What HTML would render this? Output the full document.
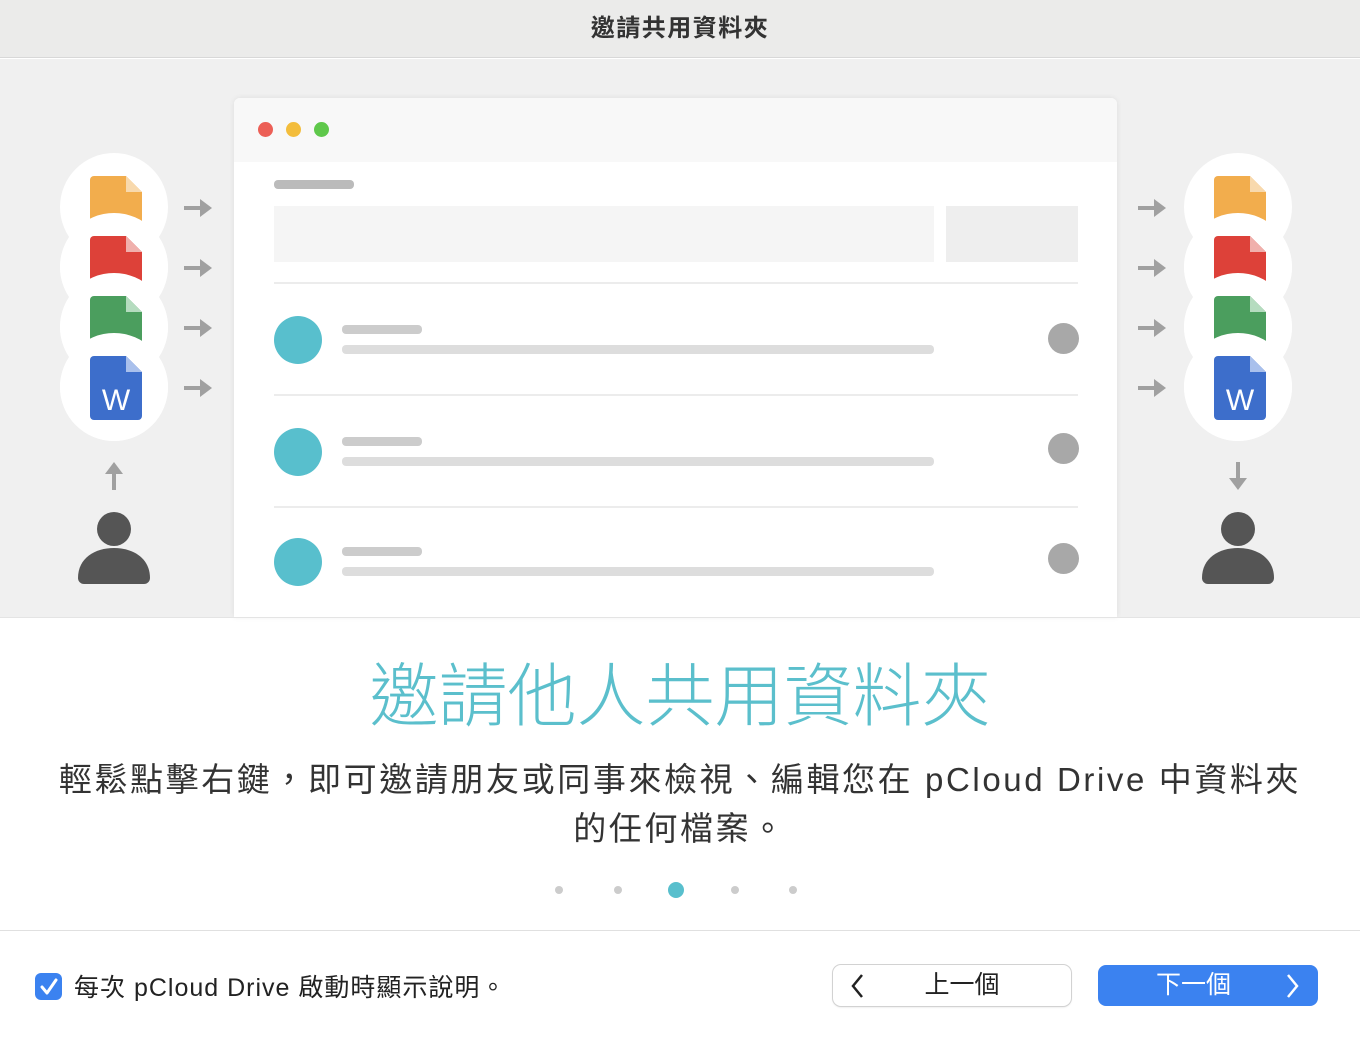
<!DOCTYPE html><html><head><meta charset="utf-8"><style>
*{margin:0;padding:0;box-sizing:border-box}
body{width:1360px;height:1044px;overflow:hidden;background:#fff;font-family:"Liberation Sans","Noto Sans CJK TC",sans-serif;position:relative}
.abs{position:absolute}
.tb{left:0;top:0;width:1360px;height:58px;background:#ebebea;border-bottom:1px solid #d8d8d8;text-align:center;line-height:58px;font-size:24px;letter-spacing:1.5px;font-weight:bold;color:#333}
.ill{left:0;top:59px;width:1360px;height:558px;background:#f0f0f0;overflow:hidden}
.win{left:234px;top:98px;width:883px;height:519px;background:#fff;box-shadow:0 0 6px rgba(0,0,0,.08);border-radius:6px 6px 0 0}
.wh{left:0;top:0;width:883px;height:64px;background:#f8f8f8;border-radius:6px 6px 0 0}
.dot{width:15px;height:15px;border-radius:50%;top:24px}
.bar{background:#ddd;border-radius:4px}
.av{width:48px;height:48px;border-radius:50%;background:#58bfcd}
.g{width:31px;height:31px;border-radius:50%;background:#a8a8a8}
</style></head><body>
<div class="abs tb">邀請共用資料夾</div>
<div class="abs ill"></div>
<svg class="abs" style="left:0;top:0" width="1360" height="617">
<g fill="#fff">
<circle cx="114" cy="207" r="54"/><circle cx="114" cy="267" r="54"/><circle cx="114" cy="327" r="54"/><circle cx="114" cy="387" r="54"/>
<circle cx="1238" cy="207" r="54"/><circle cx="1238" cy="267" r="54"/><circle cx="1238" cy="327" r="54"/><circle cx="1238" cy="387" r="54"/>
</g>
<g id="stack">
<path d="M90 180a4 4 0 0 1 4-4h32l16 16v30H90z" fill="#f2ad4d"/><path d="M126 176v16h16z" fill="#f8d9ad"/>
<circle cx="114" cy="267" r="54" fill="#fff"/>
<path d="M90 240a4 4 0 0 1 4-4h32l16 16v30H90z" fill="#dd4139"/><path d="M126 236v16h16z" fill="#f0b0ac"/>
<circle cx="114" cy="327" r="54" fill="#fff"/>
<path d="M90 300a4 4 0 0 1 4-4h32l16 16v30H90z" fill="#4b9e5e"/><path d="M126 296v16h16z" fill="#b5dcbf"/>
<circle cx="114" cy="387" r="54" fill="#fff"/>
<path d="M90 360a4 4 0 0 1 4-4h32l16 16v44a4 4 0 0 1-4 4H94a4 4 0 0 1-4-4z" fill="#3d6ecb"/><path d="M126 356v16h16z" fill="#a9c0ec"/>
<text x="116" y="410" font-size="30" fill="#fff" text-anchor="middle" font-family="Liberation Sans">W</text>
</g>
<use href="#stack" x="1124"/>
<g fill="#a0a0a0">
<g id="ar"><rect x="184" y="206" width="18" height="4"/><path d="M200 199l12 9-12 9z"/></g>
<use href="#ar" y="60"/><use href="#ar" y="120"/><use href="#ar" y="180"/>
<use href="#ar" x="954"/><use href="#ar" x="954" y="60"/><use href="#ar" x="954" y="120"/><use href="#ar" x="954" y="180"/>
<rect x="112" y="472" width="4" height="18"/><path d="M105 474l9-12 9 12z"/>
<rect x="1236" y="462" width="4" height="18"/><path d="M1229 478l9 12 9-12z"/>
</g>
<g fill="#555">
<circle cx="114" cy="529" r="17"/><path d="M78 578c0-20 17-30 36-30s36 10 36 30a6 6 0 0 1-6 6H84a6 6 0 0 1-6-6z"/>
<circle cx="1238" cy="529" r="17"/><path d="M1202 578c0-20 17-30 36-30s36 10 36 30a6 6 0 0 1-6 6h-60a6 6 0 0 1-6-6z"/>
</g>
</svg>
<div class="abs win">
<div class="abs wh"></div>
<div class="abs dot" style="left:24px;background:#ec5f56"></div>
<div class="abs dot" style="left:52px;background:#f3bd3c"></div>
<div class="abs dot" style="left:80px;background:#5fc84b"></div>
<div class="abs bar" style="left:40px;top:82px;width:80px;height:9px;background:#bbb"></div>
<div class="abs" style="left:40px;top:108px;width:660px;height:56px;background:#f5f5f5"></div>
<div class="abs" style="left:712px;top:108px;width:132px;height:56px;background:#eee"></div>
<div class="abs" style="left:40px;top:184px;width:804px;height:2px;background:#ececec"></div>
<div class="abs" style="left:40px;top:296px;width:804px;height:2px;background:#ececec"></div>
<div class="abs" style="left:40px;top:408px;width:804px;height:2px;background:#ececec"></div>
<div class="abs av" style="left:40px;top:218px"></div><div class="abs bar" style="left:108px;top:227px;width:80px;height:9px;background:#ccc"></div><div class="abs bar" style="left:108px;top:247px;width:592px;height:9px"></div><div class="abs g" style="left:814px;top:225px"></div>
<div class="abs av" style="left:40px;top:330px"></div><div class="abs bar" style="left:108px;top:339px;width:80px;height:9px;background:#ccc"></div><div class="abs bar" style="left:108px;top:359px;width:592px;height:9px"></div><div class="abs g" style="left:814px;top:335px"></div>
<div class="abs av" style="left:40px;top:440px"></div><div class="abs bar" style="left:108px;top:449px;width:80px;height:9px;background:#ccc"></div><div class="abs bar" style="left:108px;top:469px;width:592px;height:9px"></div><div class="abs g" style="left:814px;top:445px"></div>
</div>
<div class="abs" style="left:0;top:617px;width:1360px;height:1px;background:#e4e4e4"></div>
<div class="abs" style="left:0;top:652px;width:1360px;text-align:center;font-size:69px;font-weight:300;color:#5bbfcc;letter-spacing:0;line-height:90px">邀請他人共用資料夾</div>
<div class="abs" style="left:0;top:755px;width:1360px;text-align:center;font-size:33px;letter-spacing:2.6px;color:#333;line-height:49px">輕鬆點擊右鍵，即可邀請朋友或同事來檢視、編輯您在 pCloud Drive 中資料夾<br>的任何檔案。</div>
<svg class="abs" style="left:0;top:880px" width="1360" height="20"><g fill="#ccc"><circle cx="559" cy="10" r="4"/><circle cx="618" cy="10" r="4"/><circle cx="735" cy="10" r="4"/><circle cx="793" cy="10" r="4"/></g><circle cx="676" cy="10" r="8" fill="#58bfcd"/></svg>
<div class="abs" style="left:0;top:930px;width:1360px;height:1px;background:#e0e0e0"></div>
<div class="abs" style="left:35px;top:973px;width:27px;height:27px;border-radius:6px;background:#3b82f0"></div>
<svg class="abs" style="left:35px;top:973px" width="27" height="27"><path d="M7 14l5 6 9-13" stroke="#fff" stroke-width="3" fill="none" stroke-linecap="round" stroke-linejoin="round"/></svg>
<div class="abs" style="left:74px;top:971px;font-size:25px;letter-spacing:1px;color:#222;line-height:34px">每次 pCloud Drive 啟動時顯示說明。</div>
<div class="abs" style="left:833px;top:965px;width:238px;height:41px;border-radius:8px;background:#fff;box-shadow:0 0 0 1px #d2d2d2,0 1px 2px rgba(0,0,0,.15);font-size:25px;color:#222;line-height:41px;text-align:center;padding-left:20px">上一個</div>
<svg class="abs" style="left:850px;top:973px" width="16" height="26"><path d="M12 2L3 13l9 11" stroke="#222" stroke-width="2.5" fill="none"/></svg>
<div class="abs" style="left:1098px;top:965px;width:220px;height:41px;border-radius:8px;background:#3b82f0;font-size:25px;color:#fff;line-height:41px;padding-left:58px">下一個</div>
<svg class="abs" style="left:1284px;top:973px" width="16" height="26"><path d="M4 2l9 11-9 11" stroke="#fff" stroke-width="2.5" fill="none"/></svg>
</body></html>
